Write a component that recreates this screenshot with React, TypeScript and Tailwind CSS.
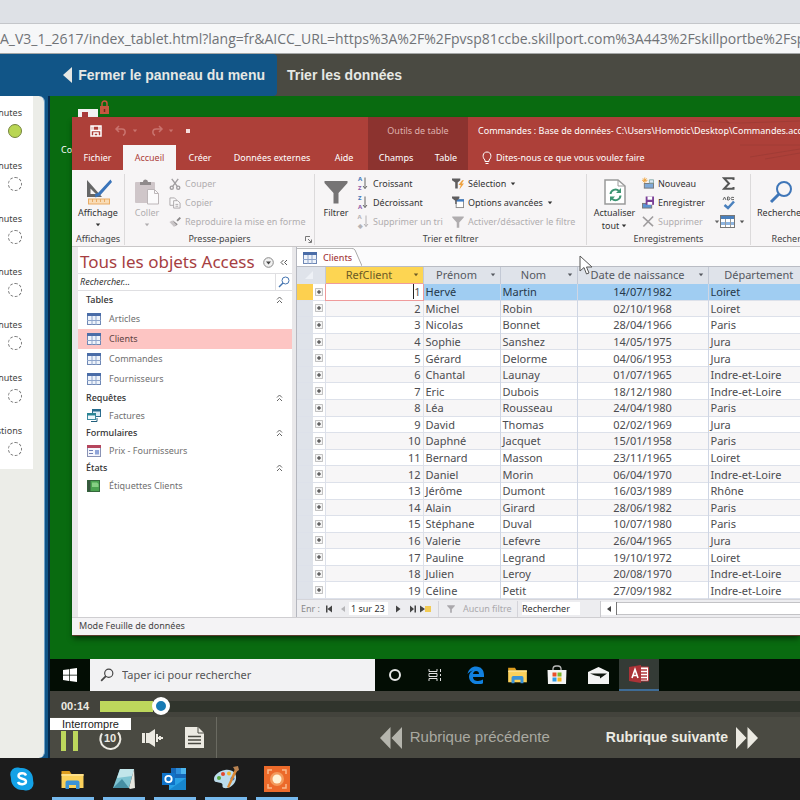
import type { ReactNode } from "react";

const durations: string[] = ["minutes", "minutes", "minutes", "minutes", "minutes", "minutes", "questions"];

const clients: string[][] = [
    ["Hervé", "Martin", "14/07/1982", "Loiret"],
    ["Michel", "Robin", "02/10/1968", "Loiret"],
    ["Nicolas", "Bonnet", "28/04/1966", "Paris"],
    ["Sophie", "Sanshez", "14/05/1975", "Jura"],
    ["Gérard", "Delorme", "04/06/1953", "Jura"],
    ["Chantal", "Launay", "01/07/1965", "Indre-et-Loire"],
    ["Eric", "Dubois", "18/12/1980", "Indre-et-Loire"],
    ["Léa", "Rousseau", "24/04/1980", "Paris"],
    ["David", "Thomas", "02/02/1969", "Jura"],
    ["Daphné", "Jacquet", "15/01/1958", "Paris"],
    ["Bernard", "Masson", "23/11/1965", "Loiret"],
    ["Daniel", "Morin", "06/04/1970", "Indre-et-Loire"],
    ["Jérôme", "Dumont", "16/03/1989", "Rhône"],
    ["Alain", "Girard", "28/06/1982", "Paris"],
    ["Stéphane", "Duval", "10/07/1980", "Paris"],
    ["Valerie", "Lefevre", "26/04/1965", "Jura"],
    ["Pauline", "Legrand", "19/10/1972", "Loiret"],
    ["Julien", "Leroy", "20/08/1970", "Indre-et-Loire"],
    ["Céline", "Petit", "27/09/1982", "Indre-et-Loire"],
];

function Caret({ className = "" }: { className?: string }) {
    return (
        <svg viewBox="0 0 6 4" className={`h-1 w-1.5 shrink-0 fill-current ${className}`}>
            <path d="M0.8 0.6h4.4L3 3.2z" />
        </svg>
    );
}

function TableIcon() {
    return (
        <svg viewBox="0 0 14 12" className="h-3 w-3.5 shrink-0">
            <rect x="0.5" y="0.5" width="13" height="11" fill="#eef3fa" stroke="#6f88b5" />
            <rect width="14" height="3" fill="#4a6da8" />
            <path d="M5 3v9M9 3v9M0 7.5h14" stroke="#8fa5cb" />
        </svg>
    );
}

function QueryIcon() {
    return (
        <svg viewBox="0 0 14 13" className="h-[13px] w-3.5 shrink-0">
            <rect x="5.5" y="0.5" width="8" height="7" fill="#dcebf5" stroke="#2c6d8f" />
            <rect x="5" width="9" height="2.5" fill="#256b8d" />
            <rect x="0.5" y="4.5" width="8" height="6" fill="#eef7fb" stroke="#3c8aa0" />
            <rect y="4" width="9" height="2.5" fill="#2a8494" />
            <path d="M4 12.5h6V9" stroke="#225f7c" fill="none" />
        </svg>
    );
}

function FormIcon() {
    return (
        <svg viewBox="0 0 14 12" className="h-3 w-3.5 shrink-0">
            <rect x="0.5" y="0.5" width="13" height="11" fill="#f5f6fb" stroke="#8a93b5" />
            <rect width="14" height="3" fill="#b5455c" />
            <path d="M2 5.5h4M2 8.5h4" stroke="#7181b5" />
            <rect x="8" y="5" width="4" height="4.5" fill="#8fa4d8" />
        </svg>
    );
}

function ReportIcon() {
    return (
        <svg viewBox="0 0 14 12" className="h-3 w-3.5 shrink-0">
            <rect x="0.5" y="0.5" width="12" height="11" fill="#4ba350" stroke="#35683c" />
            <rect x="0.5" y="0.5" width="3" height="11" fill="#37573f" />
            <path d="M5 2.5h5l1.5 1.5v3H5z" fill="#86cf83" />
        </svg>
    );
}

function ViewIcon() {
    return (
        <svg viewBox="0 0 27 26" className="h-[26px] w-[27px]">
            <path d="M2 1v17h15zM5.5 9.5l5.500 5.500H5.500z" fill="#666" fillRule="evenodd" />
            <path d="M25.5 0.5L13 14l-3 1 .5 3.500 4.500-2L27 3z" fill="#3a74ba" />
            <rect x="3.5" y="20" width="21" height="5" fill="#f9dcb6" stroke="#e9ab64" />
            <path d="M7.5 20v3M11.5 20v3M15.5 20v3M19.5 20v3" stroke="#e9ab64" />
        </svg>
    );
}

function PasteIcon() {
    return (
        <svg viewBox="0 0 26 26" className="h-[26px] w-[26px]">
            <rect x="1" y="3" width="20" height="21" rx="1" fill="#cfc6c9" />
            <path d="M6 6V3h3a2.500 2.500 0 0 1 5 0h3v3z" fill="#8f8a8b" />
            <path d="M13.5 10.5h7l4 4v10.500h-11z" fill="#fbfafb" stroke="#bcb6b8" />
            <path d="M20.5 10.5v4h4" fill="none" stroke="#bcb6b8" />
        </svg>
    );
}

function FunnelIcon({ className }: { className: string }) {
    return (
        <svg viewBox="0 0 24 24" className={`fill-current ${className}`}>
            <path d="M0.5 1h23v2L14.5 13v10.500h-5V13L0.500 3z" />
        </svg>
    );
}

function RefreshIcon() {
    return (
        <svg viewBox="0 0 22 26" className="h-[26px] w-[22px]">
            <path d="M1 1h13l7 6v18H1z" fill="#fff" stroke="#9a9a9a" strokeWidth="1.5" />
            <path d="M14 1v6h7" fill="none" stroke="#9a9a9a" />
            <path d="M6.5 15a5 5 0 0 1 8.500-3M16.5 16.5a5 5 0 0 1-8.500 3.200" fill="none" stroke="#3d9573" strokeWidth="2" />
            <path d="M17 9v5h-5zM6 22.500v-5h5z" fill="#3d9573" />
        </svg>
    );
}

function MagnifierIcon({ className }: { className: string }) {
    return (
        <svg viewBox="0 0 24 24" className={`shrink-0 ${className}`} fill="none" stroke="currentColor">
            <circle cx="15" cy="9" r="7" strokeWidth="2" />
            <path d="M10 14L2 22" strokeWidth="3" />
        </svg>
    );
}

function ScissorsIcon() {
    return (
        <svg viewBox="0 0 13 13" className="h-3 w-3" fill="none" stroke="#a19ea0" strokeWidth="1.5">
            <path d="M3 1l6 8M10 1L4 9" />
            <circle cx="3" cy="10.5" r="1.7" />
            <circle cx="10" cy="10.5" r="1.7" />
        </svg>
    );
}

function CopyIcon() {
    return (
        <svg viewBox="0 0 13 13" className="h-3 w-3" fill="#faf9fa" stroke="#aaa6a8">
            <path d="M1 1h5l2 2v6H1z" />
            <path d="M5 4h4.500l2.500 2.500V12H5zM7 8h3M7 10h3" />
        </svg>
    );
}

function BrushIcon() {
    return (
        <svg viewBox="0 0 13 13" className="h-3 w-3">
            <path d="M11.5 1L8 4.500l1.500 1.500L13 2.500zM4 4.500L9.500 9 7 11z" fill="#8c898a" />
            <path d="M3.5 5L0.500 6.500l5 5.500L8 9.500z" fill="#c9c5c7" />
        </svg>
    );
}

function SortIcon({ letters, muted }: { letters: string; muted?: boolean }) {
    return (
        <span className={`flex items-center text-[6px] leading-[9px] font-bold ${muted ? "text-[#b5b2b4]" : "text-[#4377b8]"}`}>
            <span className="flex flex-col">
                <span>{letters[0]}</span>
                <span className={muted ? "" : "text-[#8f5ca8]"}>{letters[1]}</span>
            </span>
            <svg viewBox="0 0 6 13" className="h-[13px] w-1.5" fill="none" stroke={muted ? "#b5b2b4" : "#666"}>
                <path d="M3 0.5v11M1 9l2 2.500L5 9" />
            </svg>
        </span>
    );
}

function SelectionIcon() {
    return (
        <svg viewBox="0 0 13 13" className="h-[13px] w-[13px]">
            <path d="M0 1h9v2L6.2 5.500V12H3.500V5.500L0 3z" fill="#5f5d5e" />
            <path d="M11 3L7 8h2.500L8 13l5-6.500h-2.500L13 3z" fill="#efa23f" />
        </svg>
    );
}

function AdvancedIcon() {
    return (
        <svg viewBox="0 0 13 13" className="h-[13px] w-[13px]">
            <rect x="4.5" y="3.5" width="8" height="8.5" fill="#fff" stroke="#888" />
            <rect x="4" y="3" width="9" height="2.5" fill="#3f7cc4" />
            <path d="M0 0h8v2L5 4.500V8H3.500V4.500L0 2z" fill="#5f5d5e" />
        </svg>
    );
}

function NewIcon() {
    return (
        <svg viewBox="0 0 13 13" className="h-[13px] w-[13px]">
            <path d="M3 0v6M0 3h6M1 1l4 4M5 1L1 5" stroke="#efa33c" />
            <rect x="2.5" y="6.5" width="10" height="5" fill="#7fa9d8" stroke="#777" />
            <path d="M8 2.500h4.500V6H8z" fill="#dce7f3" stroke="#8aa" />
        </svg>
    );
}

function SaveRecordIcon() {
    return (
        <svg viewBox="0 0 13 13" className="h-[13px] w-[13px]">
            <rect x="0.5" y="7.5" width="10" height="5" fill="#5b92d0" stroke="#777" />
            <path d="M4 0h9v9H4z" fill="#7a3f96" />
            <path d="M6 0h5v3.500H6zM6 6h5v3H6z" fill="#fff" />
        </svg>
    );
}

function DeleteIcon() {
    return (
        <svg viewBox="0 0 13 13" className="h-[13px] w-[13px]" fill="none" stroke="#9f9c9e" strokeWidth="1.7">
            <path d="M1 1.500l11 10M12 1L1.500 12" />
        </svg>
    );
}

function FolderIcon({ className }: { className: string }) {
    return (
        <svg viewBox="0 0 22 20" className={className}>
            <path d="M0 1h8l2 3H0z" fill="#dd9d1f" />
            <path d="M0 4h22v14H0z" fill="#fbd15b" />
            <path d="M0 4h22v2H0z" fill="#fde08a" />
            <path d="M4 19v-6.500a2 2 0 0 1 2-2h10a2 2 0 0 1 2 2V19h-3.500v-4h-7v4z" fill="#3b93d8" />
        </svg>
    );
}

function AccessIcon() {
    return (
        <svg viewBox="0 0 20 18" className="h-[18px] w-5">
            <path d="M10 2h9.500v14H10z" fill="#fff" stroke="#b33b3f" />
            <path d="M12 5h6M12 8h6M12 11h6M12 14h6" stroke="#b33b3f" strokeWidth="1.5" />
            <path d="M0 2l12-2v18L0 16z" fill="#ab3237" />
            <path d="M3 13l3-8.500L9 13M4.200 10.500h3.600" fill="none" stroke="#fff" strokeWidth="1.6" />
        </svg>
    );
}

function SmallButton({ icon, label, muted, arrow }: { icon: ReactNode; label: string; muted?: boolean; arrow?: boolean }) {
    return (
        <button className={`flex h-[19px] items-center gap-1 text-left ${muted ? "text-[#b0adaf]" : "text-[#333]"}`}>
            <span className="flex w-3 shrink-0 justify-center">{icon}</span>
            <span>{label}</span>
            {arrow && <Caret />}
        </button>
    );
}

function BigButton({ icon, label, muted, arrow }: { icon: ReactNode; label: ReactNode; muted?: boolean; arrow?: boolean }) {
    return (
        <button className={`flex flex-col items-center self-start pt-1 leading-[13px] ${muted ? "text-[#b0adaf]" : "text-[#333]"}`}>
            <span className="flex h-7 items-center">{icon}</span>
            <span>{label}</span>
            {arrow && <Caret className="mt-1" />}
        </button>
    );
}

function RibbonGroup({ title, className, children }: { title: string; className: string; children: ReactNode }) {
    return (
        <section className={`mt-1 mb-px flex shrink-0 flex-col border-r border-[#dcdadb] ${className}`}>
            <div className="flex flex-1">{children}</div>
            <h3 className="h-3 text-center leading-3 text-[#444]">{title}</h3>
        </section>
    );
}

function TitleBar() {
    return (
        <header className="flex h-[53px] bg-[#ad4039] text-white">
            <div className="flex w-[296px] shrink-0 flex-col">
                <div className="flex h-7 items-center gap-3 pl-[18px]">
                    <svg viewBox="0 0 12 12" className="h-3 w-3" fill="none" stroke="#fff" strokeWidth="1.5">
                        <path d="M1 1h10v10H1zM3 1v4M9 1v4M1 5.500h10M4 11V8h4v3" />
                    </svg>
                    <span className="flex items-center gap-1 text-[#c9736e]">
                        <svg viewBox="0 0 14 12" className="h-3 w-3.5" fill="none" stroke="currentColor" strokeWidth="1.5">
                            <path d="M5 1L2 4l3 3M2 4h6c4 0 4 5 1 6.500" />
                        </svg>
                        <Caret />
                    </span>
                    <span className="flex items-center gap-1 text-[#c9736e]">
                        <svg viewBox="0 0 14 12" className="h-3 w-3.5" fill="none" stroke="currentColor" strokeWidth="1.5">
                            <path d="M9 1l3 3-3 3M12 4H6c-4 0-4 5-1 6.500" />
                        </svg>
                        <Caret />
                    </span>
                    <span className="h-1 w-1 bg-[#f6dedd]" />
                </div>
                <nav className="flex flex-1 items-stretch">
                    <button className="w-[51px]">Fichier</button>
                    <button className="w-[53px] bg-[#f7f5f6] text-[#ad4039]">Accueil</button>
                    <button className="w-12">Créer</button>
                    <button className="w-24">Données externes</button>
                    <button className="w-12">Aide</button>
                </nav>
            </div>
            <div className="flex w-[100px] shrink-0 flex-col bg-[#8c332f]">
                <p className="flex h-7 items-center justify-center text-[#dfb0ad]">Outils de table</p>
                <nav className="flex flex-1">
                    <button className="w-14">Champs</button>
                    <button className="flex-1">Table</button>
                </nav>
            </div>
            <div className="relative flex min-w-0 flex-1 flex-col pl-[10px] whitespace-nowrap">
                <svg viewBox="0 0 120 53" className="absolute top-0 right-0 h-[53px] w-[120px]" fill="none" stroke="#a03c36">
                    <path d="M10 4l50 2 60-2M60 28h60M70 40l50-8M85 42l35-6" />
                </svg>
                <h1 className="relative flex h-7 items-center">Commandes : Base de données- C:\Users\Homotic\Desktop\Commandes.accdb</h1>
                <button className="relative flex flex-1 items-center gap-1 pl-1">
                    <svg viewBox="0 0 10 14" className="h-3.5 w-2.5" fill="none" stroke="#fff">
                        <path d="M3 10.500V9C0 6.500 0.500 1 5 1s5 5.500 2 8v1.500zM3.500 12.500h3" />
                    </svg>
                    Dites-nous ce que vous voulez faire
                </button>
            </div>
        </header>
    );
}

function Ribbon() {
    return (
        <div className="flex h-[77px] overflow-hidden border-b border-[#c9c7c8] bg-[#f7f5f6] whitespace-nowrap">
            <RibbonGroup title="Affichages" className="w-[53px]">
                <div className="flex flex-1 justify-center">
                    <BigButton icon={<ViewIcon />} label="Affichage" arrow />
                </div>
            </RibbonGroup>
            <RibbonGroup title="Presse-papiers" className="relative w-[190px]">
                <div className="flex w-11 justify-center">
                    <BigButton icon={<PasteIcon />} label="Coller" muted arrow />
                </div>
                <div className="flex flex-col">
                    <SmallButton icon={<ScissorsIcon />} label="Couper" muted />
                    <SmallButton icon={<CopyIcon />} label="Copier" muted />
                    <SmallButton icon={<BrushIcon />} label="Reproduire la mise en forme" muted />
                </div>
                <svg viewBox="0 0 7 7" className="absolute right-0.5 bottom-0.5 h-[7px] w-[7px]" fill="none" stroke="#777">
                    <path d="M0.5 5V0.500H5M3 3l3 3M6.500 3.500v3h-3" />
                </svg>
            </RibbonGroup>
            <RibbonGroup title="Trier et filtrer" className="w-[272px]">
                <div className="flex w-[42px] justify-center">
                    <BigButton icon={<FunnelIcon className="h-6 w-6 text-[#767475]" />} label="Filtrer" />
                </div>
                <div className="flex w-[95px] flex-col">
                    <SmallButton icon={<SortIcon letters="AZ" />} label="Croissant" />
                    <SmallButton icon={<SortIcon letters="ZA" />} label="Décroissant" />
                    <SmallButton icon={<SortIcon letters="A◆" muted />} label="Supprimer un tri" muted />
                </div>
                <div className="flex flex-1 flex-col">
                    <SmallButton icon={<SelectionIcon />} label="Sélection" arrow />
                    <SmallButton icon={<AdvancedIcon />} label="Options avancées" arrow />
                    <SmallButton icon={<FunnelIcon className="h-3 w-3" />} label="Activer/désactiver le filtre" muted />
                </div>
            </RibbonGroup>
            <RibbonGroup title="Enregistrements" className="w-[164px]">
                <div className="flex w-[55px] justify-center">
                    <BigButton
                        icon={<RefreshIcon />}
                        label={
                            <span className="flex flex-col items-center">
                                <span>Actualiser</span>
                                <span className="flex items-center gap-0.5">tout<Caret /></span>
                            </span>
                        }
                    />
                </div>
                <div className="flex w-[78px] flex-col">
                    <SmallButton icon={<NewIcon />} label="Nouveau" />
                    <SmallButton icon={<SaveRecordIcon />} label="Enregistrer" />
                    <div className="flex items-center justify-between text-[#666]">
                        <SmallButton icon={<DeleteIcon />} label="Supprimer" muted />
                        <Caret />
                    </div>
                </div>
                <div className="flex flex-col text-[#555]">
                    <button className="flex h-[19px] items-center" aria-label="Totaux">
                        <svg viewBox="0 0 13 13" className="ml-0.5 h-[13px] w-[13px]" fill="none" stroke="#555" strokeWidth="2">
                            <path d="M11.5 3V1.200H2L7 6.500 2 11.800h9.500V10" />
                        </svg>
                    </button>
                    <button className="flex h-[19px] items-center" aria-label="Orthographe">
                        <svg viewBox="0 0 13 14" className="ml-0.5 h-3.5 w-[13px]" fill="none">
                            <path d="M1 4l1.500-3L4 4M5.500 1v3h1.500q1.500-1 0-1.500q1-1 0-1.500zM12 1.500q-3-1-3 1t3 1" stroke="#666" />
                            <path d="M2.5 9L6 12l6-6.500" stroke="#4a80bd" strokeWidth="2.5" />
                        </svg>
                    </button>
                    <button className="flex h-[19px] items-center gap-1" aria-label="Plus">
                        <svg viewBox="0 0 15 13" className="h-[13px] w-[15px]">
                            <rect x="0.5" y="0.5" width="14" height="12" fill="#fff" stroke="#777" />
                            <rect x="1" y="1" width="13" height="3" fill="#4a80bd" />
                            <rect x="1" y="7" width="13" height="3" fill="#8db4e0" />
                            <path d="M5.5 4v8M10.5 4v8" stroke="#999" />
                        </svg>
                        <Caret />
                    </button>
                </div>
            </RibbonGroup>
            <RibbonGroup title="Rechercher" className="w-[90px]">
                <div className="flex pl-1.5">
                    <BigButton icon={<MagnifierIcon className="h-6 w-6 text-[#3f76b8]" />} label="Rechercher" />
                </div>
            </RibbonGroup>
        </div>
    );
}

function NavHeading({ label }: { label: string }) {
    return (
        <h3 className="flex h-[18px] items-center justify-between pr-[9px] pl-2 font-medium text-[#333]">
            {label}
            <svg viewBox="0 0 7 8" className="h-2 w-[7px]" fill="none" stroke="#666">
                <path d="M1 3.500l2.500-2.500L6 3.500M1 7l2.500-2.500L6 7" />
            </svg>
        </h3>
    );
}

function NavItem({ icon, label, tall, selected }: { icon: ReactNode; label: string; tall?: boolean; selected?: boolean }) {
    return (
        <a
            href={`#${label}`}
            className={`flex items-center gap-2 pl-[9px] ${tall ? "h-5" : "h-[17px]"} ${selected ? "bg-[#fdc5c3] text-[#5e4444]" : "text-[#707070]"}`}
        >
            {icon}
            {label}
        </a>
    );
}

function NavigationPane() {
    return (
        <aside className="flex w-[222px] shrink-0 flex-col border-x-4 border-[#e9e8ea] bg-white">
            <div className="flex h-[26px] items-center gap-1.5 pt-1 pl-0.5">
                <h2 className="flex-1 text-[17px] leading-6 whitespace-nowrap text-[#a63e42]">Tous les objets Access</h2>
                <svg viewBox="0 0 11 11" className="h-[11px] w-[11px] shrink-0">
                    <circle cx="5.5" cy="5.5" r="4.8" fill="#f1f1f1" stroke="#888" />
                    <path d="M3 4.500h5L5.500 7.500z" fill="#444" />
                </svg>
                <svg viewBox="0 0 8 7" className="mr-1 h-[7px] w-2 shrink-0" fill="none" stroke="#555">
                    <path d="M3.5 1L1 3.500 3.500 6M7 1L4.500 3.500 7 6" />
                </svg>
            </div>
            <label className="flex h-[18px] items-center border-y border-[#dfdfe2]">
                <input aria-label="Rechercher" placeholder="Rechercher..." className="w-full min-w-0 flex-1 pl-0.5 italic outline-none placeholder:text-[#333]" />
                <span className="flex h-full w-[17px] items-center justify-center border-l border-[#dfdfe2]">
                    <MagnifierIcon className="h-3 w-3 text-[#4474b0]" />
                </span>
            </label>
            <nav>
                <NavHeading label="Tables" />
                <NavItem icon={<TableIcon />} label="Articles" tall />
                <NavItem icon={<TableIcon />} label="Clients" tall selected />
                <NavItem icon={<TableIcon />} label="Commandes" tall />
                <NavItem icon={<TableIcon />} label="Fournisseurs" tall />
                <NavHeading label="Requêtes" />
                <NavItem icon={<QueryIcon />} label="Factures" />
                <NavHeading label="Formulaires" />
                <NavItem icon={<FormIcon />} label="Prix - Fournisseurs" />
                <NavHeading label="États" />
                <NavItem icon={<ReportIcon />} label="Étiquettes Clients" />
            </nav>
        </aside>
    );
}

function ColumnHeader({ label, active }: { label: string; active?: boolean }) {
    return (
        <th className={`border-r border-[#c3c9d5] p-0 font-normal ${active ? "bg-[#fdd552] text-[#6b5a26]" : ""}`}>
            <span className="flex items-center pr-1">
                <span className="flex-1">{label}</span>
                <Caret />
            </span>
        </th>
    );
}

function Datasheet() {
    return (
        <div className="overflow-hidden">
            <table className="h-[332px] w-full min-w-[523px] table-fixed border-collapse text-[11px] text-[#4c4c50]">
                <colgroup>
                    <col className="w-4" />
                    <col className="w-3" />
                    <col className="w-[98px]" />
                    <col className="w-[77px]" />
                    <col className="w-[77px]" />
                    <col className="w-[131px]" />
                    <col />
                </colgroup>
                <thead>
                    <tr className="bg-[#dfe3ea] leading-4 text-[#55585f]">
                        <th colSpan={2} className="border-r border-[#c3c9d5] p-0">
                            <svg viewBox="0 0 8 8" className="ml-2 h-2 w-2 fill-[#eef1f6]">
                                <path d="M8 0v8H0z" />
                            </svg>
                        </th>
                        <ColumnHeader label="RefClient" active />
                        <ColumnHeader label="Prénom" />
                        <ColumnHeader label="Nom" />
                        <ColumnHeader label="Date de naissance" />
                        <ColumnHeader label="Département" />
                    </tr>
                </thead>
                <tbody>
                    {clients.map(([firstName, lastName, birthDate, department], index) => (
                        <tr
                            key={index}
                            className={`border-b border-[#dde1ea] leading-[15px] ${index === 0 ? "bg-[#a0cdf2] text-[#26384a]" : index % 2 ? "bg-[#f7f6f7]" : "bg-white"}`}
                        >
                            <td className={`p-0 ${index === 0 ? "bg-[#fdd04f]" : "bg-[#dfe3ea]"}`}></td>
                            <td className="bg-white p-0">
                                <svg viewBox="0 0 8 8" className="ml-0.5 h-2 w-2" fill="#f4f4f4" stroke="#8b8b8b">
                                    <path d="M0.5 0.500h7v7h-7z" strokeWidth="0.5" />
                                    <path d="M4 2v4M2 4h4" stroke="#333" />
                                </svg>
                            </td>
                            <td
                                className={
                                    index === 0
                                        ? "border border-[#ef9b9b] bg-white p-0 pr-0.5 text-right text-[#555]"
                                        : "border-x border-[#dde1ea] p-0 pr-0.5 text-right"
                                }
                            >
                                {index === 0 ? <span className="border-l border-[#222]">{index + 1}</span> : index + 1}
                            </td>
                            <td className="border-r border-[#cfd6e4] p-0 pl-0.5">{firstName}</td>
                            <td className="border-r border-[#cfd6e4] p-0 pl-0.5">{lastName}</td>
                            <td className="border-r border-[#cfd6e4] p-0 text-center">{birthDate}</td>
                            <td className="border-r border-[#cfd6e4] p-0 pl-0.5">{department}</td>
                        </tr>
                    ))}
                </tbody>
            </table>
        </div>
    );
}

function RecordBar() {
    return (
        <div className="flex h-[18px] items-center border-t border-[#d5d5da] bg-[#ededf0] pl-1 whitespace-nowrap text-[#333]">
            <span className="w-6 text-[#888]">Enr :</span>
            <svg viewBox="0 0 22 8" className="h-2 w-[22px]">
                <path d="M1 0.500h1.500v7H1zM7 0.500v7L2.500 4z" fill="#444" />
                <path d="M20 1v6l-4-3z" fill="#b5b5b8" />
            </svg>
            <input aria-label="Enregistrement actif" defaultValue="1 sur 23" className="ml-0.5 h-[13px] w-[39px] bg-white pl-0.5" />
            <svg viewBox="0 0 40 8" className="ml-1.5 h-2 w-10">
                <path d="M2 0.500v7L6.500 4zM16 0.500v7L20 4zM20.500 0.500h1.500v7h-1.500zM26 0.500v7L31 4z" fill="#444" />
                <path d="M31 1h6v6h-6z" fill="#f2cb55" />
            </svg>
            <span className="ml-1 flex h-4 w-20 items-center gap-2 border-x border-[#d4d4da] pl-2 text-[#aaa8ac]">
                <FunnelIcon className="h-2 w-2" />
                Aucun filtre
            </span>
            <input aria-label="Rechercher dans la table" defaultValue="Rechercher" className="ml-1 h-[13px] w-[58px] bg-white" />
            <span className="ml-5 flex h-4 flex-1 items-center border-l border-[#c9c9cd]">
                <span className="flex h-[13px] w-4 items-center justify-center border-r border-[#777] bg-white">
                    <svg viewBox="0 0 4 6" className="h-1.5 w-1 fill-[#444]">
                        <path d="M4 0v6L0 3z" />
                    </svg>
                </span>
                <span className="h-[13px] flex-1 border-y border-[#c3c3c6] bg-white" />
            </span>
        </div>
    );
}

function AccessWindow() {
    return (
        <main className="relative mt-[21px] ml-[22px] flex flex-col overflow-hidden border-b border-[#5b3a2c] bg-[#f4f3f5] shadow-md shadow-black/40">
            <TitleBar />
            <Ribbon />
            <div className="flex border-l-2 border-[#e9e8ea]">
                <NavigationPane />
                <section className="flex min-w-0 flex-1 flex-col border-l border-[#b5b7bf] bg-[#fbfbfc]">
                    <div className="flex h-5 items-end border-b border-[#b9bcc4]">
                        <a href="#clients" className="flex h-[18px] items-center gap-1.5 border-t border-[#bbb] bg-white pl-1.5 font-medium text-[#a63e42]">
                            <TableIcon />
                            Clients
                        </a>
                        <svg viewBox="0 0 10 18" className="h-[18px] w-2.5">
                            <path d="M0 0v18h10L3 2Q2 0.500 0 0.500z" fill="#fff" />
                            <path d="M0 0.500Q2 0.500 3 2l7 16" fill="none" stroke="#aaa" />
                        </svg>
                    </div>
                    <Datasheet />
                    <RecordBar />
                </section>
            </div>
            <footer className="h-[18px] border-t border-[#cfced1] pl-[7px] leading-4 text-[#444]">Mode Feuille de données</footer>
        </main>
    );
}

function VirtualTaskbar() {
    return (
        <div className="flex h-8 items-stretch bg-[#030d04] font-['Noto_Sans',sans-serif] text-[11px]">
            <button className="flex w-10 items-center justify-center" aria-label="Démarrer">
                <svg viewBox="0 0 14 14" className="h-3.5 w-3.5 fill-white">
                    <path d="M0 2l6-.8v5.500H0zM6.700 1.100L14 0v6.700H6.700zM0 7.400h6v5.500L0 12zM6.700 7.400H14V14l-7.300-1z" />
                </svg>
            </button>
            <label className="flex w-[285px] items-center gap-2 bg-[#f2f2f3] pl-2.5 text-[#444]">
                <MagnifierIcon className="h-3.5 w-3.5" />
                <input placeholder="Taper ici pour rechercher" className="min-w-0 flex-1 outline-none placeholder:text-[#555]" />
            </label>
            <span className="flex w-10 items-center justify-center">
                <span className="h-3 w-3 rounded-full border-2 border-[#e6e6e6]" />
            </span>
            <span className="flex w-10 items-center justify-center">
                <svg viewBox="0 0 14 12" className="h-3 w-3.5" fill="none" stroke="#ddd">
                    <path d="M1 0v2.500h8V0M1 12V9.500h8V12M1 4.500h8v3H1zM12.500 0v3M12.500 5v2M12.500 9v3" />
                </svg>
            </span>
            <span className="flex w-[42px] items-center justify-center">
                <svg viewBox="0 0 18 18" className="h-[18px] w-[18px] fill-[#1180df]">
                    <path d="M0.5 8C1.500 3 5 0.500 9 0.500c5 0 8 3.500 8 8.500v2H6c0 3 2.500 4 5 4 2 0 3.700-.6 5-1.400v3.600c-1.500.8-3.300 1.300-5.500 1.300C5.500 18 2 15 2 10.500 2 8 3.500 5.700 6 4.500 3.500 5 1.500 6.500 0.500 8zM6 8h6c0-2-1-3-3-3-1.500 0-2.600 1-3 3z" />
                </svg>
            </span>
            <span className="flex w-10 items-center justify-center">
                <FolderIcon className="h-[17px] w-[19px]" />
            </span>
            <span className="flex w-10 items-center justify-center">
                <svg viewBox="0 0 20 20" className="h-5 w-5">
                    <path d="M6 6V3.500A3 3 0 0 1 9 1h2a3 3 0 0 1 3 2.500V6" fill="none" stroke="#bbb" strokeWidth="1.3" />
                    <path d="M0.5 5h19L19 19H1z" fill="#f4f4f4" />
                    <path d="M5.5 7.500h4v4h-4z" fill="#e9502b" />
                    <path d="M10.5 7.500h4v4h-4z" fill="#7eb72b" />
                    <path d="M5.5 12.500h4v4h-4z" fill="#2f9be6" />
                    <path d="M10.5 12.500h4v4h-4z" fill="#f6b720" />
                </svg>
            </span>
            <span className="flex w-[42px] items-center justify-center">
                <svg viewBox="0 0 21 17" className="h-[17px] w-[21px]">
                    <path d="M0 5l10.500-5L21 5v12H0z" fill="#f3f3f3" />
                    <path d="M2 6.500h17l-7 5v-2l-5-1z" fill="#101610" />
                </svg>
            </span>
            <span className="flex w-10 items-center justify-center border-b-2 border-[#3f6c96] bg-[#343b36]">
                <AccessIcon />
            </span>
        </div>
    );
}

function Desktop() {
    return (
        <div className="relative flex flex-1 flex-col overflow-hidden bg-[#096b10] font-['Noto_Sans',sans-serif] text-[9px]">
            <svg viewBox="0 0 34 20" className="absolute top-1 left-7 h-5 w-[34px]">
                <path d="M0 9h20v10H0z" fill="#f2f2f2" />
                <path d="M4 12h6v8H4z" fill="#a9393a" />
                <path d="M22 6h9v8h-9z" fill="#c5573f" />
                <path d="M24 6V3.500a2.500 2.500 0 0 1 5 0V6" fill="none" stroke="#c5573f" strokeWidth="1.5" />
                <path d="M26.5 9v3" stroke="#6d2a1e" strokeWidth="1.5" />
            </svg>
            <span className="absolute top-[47px] left-[11px] text-white">Co</span>
            <AccessWindow />
            <svg viewBox="0 0 14 20" className="absolute top-[159px] left-[529px] h-5 w-3.5">
                <path d="M1 1v15l4-3.500L7.500 19l2.500-1-2.500-6H13z" fill="#fff" stroke="#555" />
            </svg>
        </div>
    );
}

function Player() {
    const elapsed = 14;
    const total = 184;
    const fill = (elapsed / total) * 100;

    return (
        <div className="bg-[#4a4a42] text-[#eceae2]">
            <div className="flex h-[26px] items-center bg-[#43433c] pt-1 pl-[11px]">
                <span className="w-[39px] text-[11px] font-bold">00:14</span>
                <input
                    type="range"
                    aria-label="Position"
                    min={0}
                    max={total}
                    defaultValue={elapsed}
                    className="h-[11px] min-w-0 flex-1 appearance-none [&::-webkit-slider-thumb]:h-[18px] [&::-webkit-slider-thumb]:w-[18px] [&::-webkit-slider-thumb]:appearance-none [&::-webkit-slider-thumb]:rounded-full [&::-webkit-slider-thumb]:border-4 [&::-webkit-slider-thumb]:border-white [&::-webkit-slider-thumb]:bg-[#187bb4]"
                    style={{ background: `linear-gradient(to right, #bdd75c ${fill}%, #30342c ${fill}%)` }}
                />
            </div>
            <div className="relative flex h-[41px] items-center">
                <span className="absolute top-px left-0 h-3 w-[81px] bg-white text-center text-[11px] leading-3 text-[#222]">Interrompre</span>
                <button className="flex w-[38px] justify-center gap-[7px] pt-1.5" aria-label="Interrompre">
                    <span className="h-5 w-[5px] bg-[#bdd75c]" />
                    <span className="h-5 w-[5px] bg-[#bdd75c]" />
                </button>
                <button className="relative flex w-11 justify-center" aria-label="Reculer de 10 secondes">
                    <svg viewBox="0 0 24 24" className="h-6 w-6" fill="none" stroke="currentColor" strokeWidth="2">
                        <path d="M4 7.500A10 10 0 1 0 20 6.500" />
                    </svg>
                    <span className="absolute top-1.5 text-[11px] leading-3 font-bold">10</span>
                </button>
                <button className="flex w-[41px] justify-center" aria-label="Volume">
                    <svg viewBox="0 0 22 18" className="h-[18px] w-[22px] fill-current">
                        <path d="M0 4h3v10H0zM4 4h3l6-4v18l-6-4H4z" />
                        <path d="M15 5v8M18 7v4M15 9h6" stroke="currentColor" strokeWidth="2" />
                    </svg>
                </button>
                <button className="flex w-[43px] justify-center" aria-label="Transcription">
                    <svg viewBox="0 0 19 21" className="h-[21px] w-[19px]">
                        <path d="M0 0h13l6 6v15H0z" fill="#eceae2" />
                        <path d="M3 9.500h13M3 13h13M3 16.500h13" stroke="#4a4a42" strokeWidth="1.5" />
                        <path d="M13 0v6h6" fill="none" stroke="#4a4a42" />
                    </svg>
                </button>
                <span className="h-full w-px bg-[#6a6a61]" />
                <nav className="flex flex-1 items-center justify-end gap-14 pr-[42px] whitespace-nowrap">
                    <button className="flex items-center gap-2 text-[15px] text-[#a9a9a1]">
                        <svg viewBox="0 0 22 22" className="h-[22px] w-[22px] fill-[#b5b5ad]">
                            <path d="M10.5 0v22L0 11zM22 0v22L11.500 11z" />
                        </svg>
                        Rubrique précédente
                    </button>
                    <button className="flex items-center gap-2 text-[14px] font-bold">
                        Rubrique suivante
                        <svg viewBox="0 0 22 22" className="h-[22px] w-[22px] fill-current">
                            <path d="M0 0v22l10.500-11zM11.5 0v22L22 11z" />
                        </svg>
                    </button>
                </nav>
            </div>
        </div>
    );
}

function LessonMenu() {
    return (
        <aside className="flex w-[50px] shrink-0 border-r-2 border-[#062a4c] bg-[#115587] pr-[3px]">
            <div className="flex flex-1 overflow-hidden rounded-r-md border-r border-[#6fa2c8] bg-[#ecede8]">
                <ul className="flex h-[373px] w-[33px] flex-col items-end overflow-hidden bg-white pt-2.5 pr-[11px] font-['Noto_Sans',sans-serif] text-[9px]">
                    {durations.map((label, index) => (
                        <li key={index} className="flex h-[53px] shrink-0 flex-col items-end">
                            <span className="leading-[14px] text-[#444]">{label}</span>
                            <span
                                className={`mt-1 h-3.5 w-3.5 rounded-full border ${index === 0 ? "border-[#75843e] bg-[#b9d653]" : "border-dashed border-[#777]"}`}
                            />
                        </li>
                    ))}
                </ul>
            </div>
        </aside>
    );
}

function HostTaskbar() {
    const cell = "flex w-[51px] flex-col items-center justify-between";
    const underline = "h-[3px] w-[42px] bg-[#76b9ed]";

    return (
        <footer className="flex h-[42px] bg-[#1c1c1c]">
            <a href="#skype" aria-label="Skype" className="flex w-[47px] items-center justify-center pr-1">
                <svg viewBox="0 0 24 24" className="h-6 w-6">
                    <path d="M7 0.500c2 0 2.500.6 5 .6 6 0 11 5 11 11 0 2 .5 3 .5 4.500a7 7 0 0 1-7 7c-2 0-2.500-.7-4.500-.7-6 0-11-5-11-11 0-2-.7-3-.7-4.500a7 7 0 0 1 6.700-6.900z" fill="#13a1e6" />
                    <path d="M16 8.500C15 5.500 8.500 5.500 8.500 9c0 3.500 7.500 2 7.500 5.500 0 3.500-7 3.500-8 .5" fill="none" stroke="#fff" strokeWidth="2.4" />
                </svg>
            </a>
            <a href="#explorer" aria-label="Explorateur" className={cell}>
                <FolderIcon className="mt-3 h-5 w-[23px]" />
                <span className={underline} />
            </a>
            <a href="#notepad" aria-label="Bloc-notes" className={cell}>
                <svg viewBox="0 0 24 22" className="mt-2.5 h-[22px] w-6">
                    <path d="M8 1h14l-5 19H1z" fill="#7fc4d2" />
                    <path d="M8 1h14l-2 7L5 10z" fill="#c2e5ea" />
                    <path d="M22 1l1 19-5 1-1-1z" fill="#e6e6df" />
                    <path d="M1 20l9-9 7 9z" fill="#468fa4" />
                </svg>
                <span className={underline} />
            </a>
            <a href="#outlook" aria-label="Outlook" className={cell}>
                <svg viewBox="0 0 26 22" className="mt-2.5 h-[22px] w-[26px]">
                    <path d="M9 0h15v11H9z" fill="#1668b8" />
                    <path d="M14 0h5v6h-5z" fill="#2d8fdc" />
                    <path d="M19 0h5v6h-5z" fill="#4cb6ef" />
                    <path d="M7 10h17v12H7z" fill="#28a1e6" />
                    <path d="M7 22l17-12v12z" fill="#1787cf" />
                    <path d="M0 5h13v12H0z" fill="#0f73c9" />
                    <circle cx="6.5" cy="11" r="3.2" fill="none" stroke="#fff" strokeWidth="1.8" />
                </svg>
                <span className={underline} />
            </a>
            <a href="#paint" aria-label="Paint" className={cell}>
                <svg viewBox="0 0 26 24" className="mt-2 h-6 w-[26px]">
                    <path d="M12 4c7-1 12 3 11 9s-7 10-12 9c-3-1 0-4-3-5s-7 0-7-4 5-8 11-9z" fill="#bcdcec" />
                    <circle cx="6" cy="12" r="2" fill="#57a83f" />
                    <circle cx="10" cy="8" r="2" fill="#e3482f" />
                    <circle cx="16" cy="7.5" r="2" fill="#f0b52e" />
                    <circle cx="19.5" cy="12.5" r="2" fill="#3b76c8" />
                    <path d="M22 3l2 2-8 17-2-1z" fill="#d98632" />
                    <path d="M20 1l5-1 1 4-3 2z" fill="#b98352" />
                </svg>
                <span className={underline} />
            </a>
            <a href="#capture" aria-label="Capture" className={cell}>
                <svg viewBox="0 0 26 26" className="mt-2 h-[26px] w-[26px]">
                    <path d="M0 0h26v26H0z" fill="#ec6a2a" />
                    <circle cx="13" cy="13" r="7" fill="#f39a5b" />
                    <circle cx="13" cy="13" r="4.5" fill="#fff3d6" />
                    <path d="M4 8V4h4M18 4h4v4M22 18v4h-4M8 22H4v-4" fill="none" stroke="#f9b98b" strokeWidth="1.5" />
                </svg>
                <span className={underline} />
            </a>
        </footer>
    );
}

export default function App() {
    return (
        <div className="flex min-h-screen flex-col overflow-hidden bg-[#1c1c1c] font-['Liberation_Sans',sans-serif]">
            <div className="h-6 border-b border-[#c4c6ca] bg-[#dee1e6]" />
            <div className="flex h-[30px] items-center overflow-hidden border-b border-[#a4a6a6] bg-[#f6f7f8]">
                <p className="font-['Open_Sans',sans-serif] text-[14px] whitespace-nowrap text-[#707377]">
                    A_V3_1_2617/index_tablet.html?lang=fr&amp;AICC_URL=https%3A%2F%2Fpvsp81ccbe.skillport.com%3A443%2Fskillportbe%2Fsp
                </p>
            </div>
            <header className="flex h-[42px] items-stretch bg-[#4a4a42] text-[14px] font-bold text-[#e6e8e4]">
                <button className="flex w-[277px] items-center justify-end gap-1.5 rounded-r-sm bg-[#115587] pr-3">
                    <svg viewBox="0 0 9 16" className="h-4 w-[9px] fill-current">
                        <path d="M9 0v16L0 8z" />
                    </svg>
                    Fermer le panneau du menu
                </button>
                <h1 className="flex items-center pl-2.5">Trier les données</h1>
            </header>
            <div className="flex flex-1">
                <LessonMenu />
                <div className="flex min-w-0 flex-1 flex-col">
                    <Desktop />
                    <VirtualTaskbar />
                    <Player />
                </div>
            </div>
            <HostTaskbar />
        </div>
    );
}
